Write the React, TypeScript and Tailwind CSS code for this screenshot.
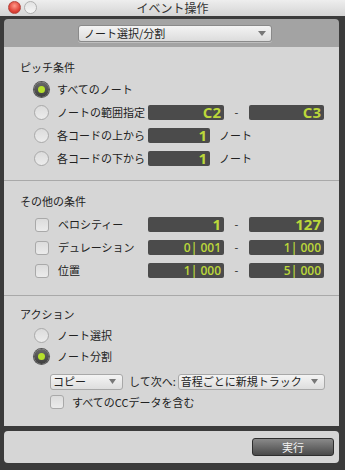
import React from "react";

const jp = { fontFamily: '"Noto Sans CJK JP", "Noto Sans", sans-serif' };

function Radio({ on }: { on?: boolean }) {
  if (on)
    return (
      <div className="w-[15px] h-[15px] rounded-full bg-gradient-to-b from-[#6a6a6a] to-[#3e3e3e] flex items-center justify-center shadow-[0_0_0_1px_#555]">
        <div className="w-[7px] h-[7px] rounded-full bg-[#b6e02c]" />
      </div>
    );
  return <div className="w-[15px] h-[15px] rounded-full border border-[#a9a9a9] bg-gradient-to-b from-[#dcdcdc] to-[#ececec]" />;
}

function Check() {
  return <div className="w-[14px] h-[14px] rounded-[3px] border border-[#a9a9a9] bg-gradient-to-b from-[#dcdcdc] to-[#ebebeb]" />;
}

function Field({ v, w, big }: { v: string; w: string; big?: boolean }) {
  return (
    <div
      className={`${w} h-[15px] rounded-[2px] bg-[#4b4b4b] flex items-center justify-end pr-[3px] text-[#bcd83a] ${big ? "text-[15px] font-bold" : "text-[12px] font-semibold"}`}
      style={{ fontFamily: '"Open Sans", "Liberation Sans", sans-serif' }}
    >
      {v}
    </div>
  );
}

function Popup({ label, w }: { label: string; w: string }) {
  return (
    <div className={`${w} h-[16px] rounded-[3px] border border-[#a8a8a8] bg-gradient-to-b from-[#f4f4f4] to-[#dedede] flex items-center justify-between pl-[2px] pr-[6px] text-[11px] text-[#222]`}>
      <span className="leading-none">{label}</span>
      <svg width="7" height="5" viewBox="0 0 7 5"><path d="M0 0h7L3.5 5z" fill="#777" /></svg>
    </div>
  );
}

export default function App() {
  return (
    <div className="w-[345px] h-[470px] bg-[#3b3b3b] flex flex-col overflow-hidden" style={jp}>
      {/* title bar */}
      <div className="h-[16px] bg-gradient-to-b from-[#eeeeee] to-[#d4d4d4] flex items-center relative">
        <div className="absolute left-[8px] top-[1px] w-[13px] h-[13px] rounded-full bg-[radial-gradient(circle_at_50%_35%,#ff9a8a,#e0453a_60%,#b9281f)] border border-[#b5453c]" />
        <div className="absolute left-[24px] top-[1px] w-[13px] h-[13px] rounded-full bg-gradient-to-b from-[#e2e2e2] to-[#f6f6f6] border border-[#b0b0b0]" />
        <div className="flex-1 text-center text-[12px] leading-none text-[#333]">イベント操作</div>
      </div>
      <div className="h-[3px]" />
      {/* main container */}
      <div className="mx-[4px] mr-[6px] h-[407px] rounded-t-[4px] overflow-hidden flex flex-col">
        <div className="h-[28px] bg-[#a3a3a3] flex items-center pl-[74px]">
          <div className="w-[194px] h-[17px] rounded-[3px] border border-[#8a8a8a] bg-gradient-to-b from-[#f4f4f4] to-[#dcdcdc] flex items-center justify-between pl-[5px] pr-[5px] text-[11px] text-[#222] shadow-[0_1px_0_rgba(255,255,255,0.3)]">
            <span className="leading-none">ノート選択/分割</span>
            <svg width="8" height="5" viewBox="0 0 8 5"><path d="M0 0h8L4 5z" fill="#777" /></svg>
          </div>
        </div>
        <div className="flex-1 bg-[#d6d6d6] flex flex-col text-[11px] text-[#222]">
          {/* pitch */}
          <div className="h-[134px] border-b border-[#a9a9a9] pl-[16px] pt-[15px]">
            <div className="leading-none mb-[5px]">ピッチ条件</div>
            <div className="flex flex-col pl-[14px]">
              <div className="h-[23px] flex items-center gap-[8px]">
                <Radio on />
                <span>すべてのノート</span>
              </div>
              <div className="h-[23px] flex items-center">
                <Radio />
                <span className="ml-[8px] w-[91px]">ノートの範囲指定</span>
                <Field v="C2" w="w-[76px]" big />
                <span className="w-[25px] text-center">-</span>
                <Field v="C3" w="w-[75px]" big />
              </div>
              <div className="h-[23px] flex items-center">
                <Radio />
                <span className="ml-[8px] w-[91px]">各コードの上から</span>
                <Field v="1" w="w-[62px]" big />
                <span className="ml-[9px]">ノート</span>
              </div>
              <div className="h-[23px] flex items-center">
                <Radio />
                <span className="ml-[8px] w-[91px]">各コードの下から</span>
                <Field v="1" w="w-[62px]" big />
                <span className="ml-[9px]">ノート</span>
              </div>
            </div>
          </div>
          {/* other */}
          <div className="h-[115px] border-b border-[#a9a9a9] pl-[16px] pt-[15px]">
            <div className="leading-none mb-[6px]">その他の条件</div>
            <div className="flex flex-col pl-[15px]">
              {[
                ["ベロシティー", "1", "127", true],
                ["デュレーション", "0| 001", "1| 000", false],
                ["位置", "1| 000", "5| 000", false],
              ].map(([l, a, b, big]) => (
                <div key={l as string} className="h-[23px] flex items-center">
                  <Check />
                  <span className="ml-[9px] w-[90px]">{l as string}</span>
                  <Field v={a as string} w="w-[76px]" big={big as boolean} />
                  <span className="w-[25px] text-center">-</span>
                  <Field v={b as string} w="w-[75px]" big={big as boolean} />
                </div>
              ))}
            </div>
          </div>
          {/* action */}
          <div className="flex-1 pl-[16px] pt-[13px]">
            <div className="leading-none mb-[5px]">アクション</div>
            <div className="flex flex-col pl-[14px]">
              <div className="h-[21px] flex items-center gap-[8px]">
                <Radio />
                <span>ノート選択</span>
              </div>
              <div className="h-[21px] flex items-center gap-[8px]">
                <Radio on />
                <span>ノート分割</span>
              </div>
              <div className="h-[25px] flex items-center pl-[16px] pt-[4px]">
                <Popup label="コピー" w="w-[73px]" />
                <span className="ml-[6px] mr-[2px]">して次へ:</span>
                <Popup label="音程ごとに新規トラック" w="w-[147px]" />
              </div>
              <div className="h-[20px] flex items-center pl-[16px] gap-[8px]">
                <Check />
                <span>すべてのCCデータを含む</span>
              </div>
            </div>
          </div>
        </div>
      </div>
      <div className="h-[5px]" />
      {/* bottom */}
      <div className="mx-[4px] mr-[6px] h-[32px] rounded-[4px] bg-[#d6d6d6] flex items-center justify-end pr-[5px]">
        <div className="w-[82px] h-[18px] rounded-[3px] border border-[#2e2e2e] bg-gradient-to-b from-[#8a8a8a] to-[#4a4a4a] flex items-center justify-center text-[11px] text-[#f0f0f0]">
          実行
        </div>
      </div>
    </div>
  );
}
